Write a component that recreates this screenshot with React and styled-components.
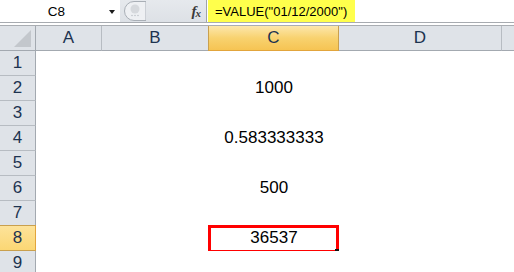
import React from 'react'
import styled, { createGlobalStyle, css } from 'styled-components'

// last column is only a sliver at the window edge, its letter is off screen
const columns = [
    { key: 'A', width: 66, label: 'A' },
    { key: 'B', width: 107, label: 'B' },
    { key: 'C', width: 130, label: 'C' },
    { key: 'D', width: 163, label: 'D' },
    { key: 'E', width: 130, label: '' },
]

const values = {
    2: '1000',
    4: '0.583333333',
    6: '500',
    8: '36537',
}

const activeCol = 'C'
const activeRow = 8

export default function App() {
    return (
        <>
            <GlobalStyle />
            <Page>
                <FormulaBar>
                    <NameBox>
                        <NameText>C8</NameText>
                        <Caret />
                    </NameBox>
                    <BarTools>
                        <Splitter>
                            <svg width='24' height='20' viewBox='0 0 24 20'>
                                <path d='M12 0.5 A9.5 9.5 0 0 0 12 19.5 L24 19.5 L24 0.5 Z' fill='#eef0f3' stroke='#a9afb6' />
                                <circle cx='13' cy='8' r='4.5' fill='#d6d9dd' />
                                <circle cx='10' cy='14.5' r='0.8' fill='#bfc4c9' />
                                <circle cx='13' cy='14.5' r='0.8' fill='#bfc4c9' />
                                <circle cx='16' cy='14.5' r='0.8' fill='#bfc4c9' />
                            </svg>
                        </Splitter>
                        <Fx>f<sub>x</sub></Fx>
                    </BarTools>
                    <FormulaInput>
                        <Highlight>=VALUE("01/12/2000")</Highlight>
                    </FormulaInput>
                </FormulaBar>
                <Gap />
                <Sheet>
                    <Corner>
                        <svg width='17' height='17' viewBox='0 0 17 17'>
                            <path d='M17 0 L17 17 L0 17 Z' fill='#c3c7cc' />
                        </svg>
                    </Corner>
                    {columns.map(c => (
                        <ColHeader key={c.key} active={c.key === activeCol}>{c.label}</ColHeader>
                    ))}
                    {[1, 2, 3, 4, 5, 6, 7, 8, 9].map(r => (
                        <React.Fragment key={r}>
                            <RowHeader active={r === activeRow}>{r}</RowHeader>
                            {columns.map(c => (
                                <Cell key={c.key}>
                                    {c.key === 'C' && values[r]}
                                    {c.key === activeCol && r === activeRow && (
                                        <>
                                            <Marker />
                                            <FillHandle />
                                        </>
                                    )}
                                </Cell>
                            ))}
                        </React.Fragment>
                    ))}
                </Sheet>
            </Page>
        </>
    )
}

const GlobalStyle = createGlobalStyle`
    html, body {
        margin: 0;
        padding: 0;
        background: #ffffff;
        overflow: hidden;
    }
    * {
        box-sizing: border-box;
    }
`

const Page = styled.div`
    width: 514px;
    height: 272px;
    overflow: hidden;
    font-family: "Liberation Sans", Arial, sans-serif;
    background: #ffffff;
`

const FormulaBar = styled.div`
    display: flex;
    height: 23px;
    border-bottom: 1px solid #a7abb0;
    background: #ffffff;
`

const NameBox = styled.div`
    width: 120px;
    display: flex;
    align-items: center;
    padding-right: 5px;
    background: #ffffff;
`

const NameText = styled.span`
    flex: 1;
    text-align: center;
    font-size: 13.5px;
    color: #000000;
    padding-left: 4px;
`

const Caret = styled.span`
    width: 0;
    height: 0;
    border-left: 3.5px solid transparent;
    border-right: 3.5px solid transparent;
    border-top: 4px solid #1b1b1b;
    margin-top: 1px;
`

const BarTools = styled.div`
    width: 87px;
    display: flex;
    align-items: center;
    justify-content: space-between;
    padding: 0 6px 0 2px;
    background: linear-gradient(#e6e9ed, #dde1e6);
    border-right: 1px solid #9ea3a9;
`

const Splitter = styled.div`
    display: flex;
    align-items: center;
    height: 20px;
`

const Fx = styled.span`
    font-family: "Liberation Serif", "Times New Roman", serif;
    font-style: italic;
    font-weight: bold;
    font-size: 15px;
    color: #3a3a3a;
    letter-spacing: -1px;
    sub {
        font-size: 11px;
        vertical-align: -1px;
    }
`

const FormulaInput = styled.div`
    flex: 1;
    display: flex;
    padding-left: 1px;
    background: #ffffff;
`

const Highlight = styled.div`
    display: flex;
    align-items: center;
    padding: 0 8px 0 7px;
    background: #ffff4c;
    font-size: 13px;
    color: #000000;
    height: 22px;
`

const Gap = styled.div`
    height: 3px;
    border-bottom: 1px solid #a9adb2;
    background: #ffffff;
`

const Sheet = styled.div`
    display: grid;
    grid-template-columns: 36px ${columns.map(c => c.width + 'px').join(' ')};
    grid-auto-rows: 25px;
`

const headerBase = css`
    display: flex;
    align-items: center;
    justify-content: center;
    font-size: 17px;
    color: #1d3350;
    background: #dfe3e8;
`

const Corner = styled.div`
    ${headerBase};
    align-items: flex-end;
    justify-content: flex-end;
    padding: 0 4px 3px 0;
    border-right: 1px solid #a3a9b0;
    border-bottom: 1px solid #a3a9b0;
`

const ColHeader = styled.div`
    ${headerBase};
    border-right: 1px solid #b7bcc2;
    border-bottom: 1px solid #a3a9b0;
    ${props => props.active && css`
        background: linear-gradient(#fce7ac, #f8d26f 50%, #f6c453);
        border-right: 1px solid #c9a04e;
        border-bottom: 1px solid #e2a53c;
        margin-left: -1px;
        border-left: 1px solid #c9a04e;
    `}
`

const RowHeader = styled.div`
    ${headerBase};
    border-right: 1px solid #a3a9b0;
    border-bottom: 1px solid #b7bcc2;
    ${props => props.active && css`
        background: linear-gradient(#fde39a, #fbd774);
        border-right: 1px solid #e2a53c;
        border-bottom: 1px solid #c9a04e;
        margin-top: -1px;
        border-top: 1px solid #c9a04e;
    `}
`

const Cell = styled.div`
    position: relative;
    display: flex;
    align-items: center;
    justify-content: center;
    font-size: 17px;
    color: #000000;
    background: #ffffff;
    padding-bottom: 1px;
`

const Marker = styled.div`
    position: absolute;
    left: -1px;
    top: -1px;
    right: 0;
    bottom: -2px;
    border: 3.5px solid #ff0000;
    pointer-events: none;
`

const FillHandle = styled.div`
    position: absolute;
    right: -2px;
    bottom: -3px;
    width: 6px;
    height: 5px;
    background: #111111;
`
